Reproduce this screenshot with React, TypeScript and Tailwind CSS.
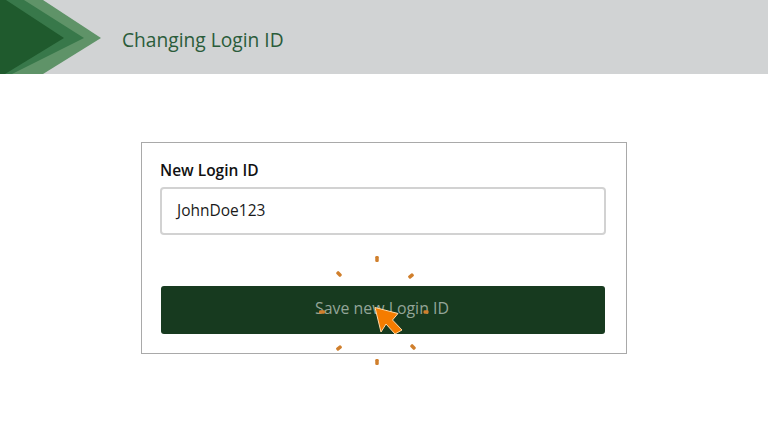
export default function App() {
  const ticks = [
    [377, 259, 0, 6],
    [411, 276, 50, 6],
    [426, 312, 90, 5],
    [413, 347, 135, 6],
    [377, 362, 180, 6],
    [339, 348, 232, 6],
    [322, 312, 270, 6],
    [339, 274, -45, 6],
  ];
  return (
    <div className="relative w-[768px] h-[432px] overflow-hidden bg-white font-['Open_Sans',sans-serif]">
      <header className="flex h-[74px] items-center bg-[#d1d3d4]">
        <svg width="102" height="74" viewBox="0 0 102 74" className="shrink-0">
          <polygon points="0,0 43,0 101,38 43,74 0,74" fill="#5f9368" />
          <polygon points="0,0 24,0 84,38 12,74 0,74" fill="#38784a" />
          <polygon points="0,0 6,0 64,38 5,74 0,74" fill="#1f5a2d" />
        </svg>
        <h1 className="ml-[20px] mt-[5px] text-[19.2px] leading-none text-[#2a5c3a]">Changing Login ID</h1>
      </header>
      <main className="flex pl-[141px] pt-[68px]">
        <section className="flex h-[212px] w-[486px] flex-col border border-[#a9a9a9] pl-[18px] pr-[20px] pt-[16px]">
          <label className="text-[15.5px] font-semibold leading-[22px] text-[#111111]">New Login ID</label>
          <div className="mt-[6px] flex h-[48px] w-[446px] items-center rounded-[4px] border-2 border-[#d2d2d2] pb-[1px] pl-[15px] text-[15.5px] text-[#1a1a1a]">
            JohnDoe123
          </div>
          <button className="ml-px mt-[51px] h-[48px] w-[444px] rounded-[3px] bg-[#173a1f] pb-[2px] pr-[2px] text-[15.9px] text-[#93a598]">
            Save new Login ID
          </button>
        </section>
      </main>
      <svg width="768" height="432" viewBox="0 0 768 432" className="absolute left-0 top-0">
        {ticks.map(([x, y, r, h]) => (
          <rect key={`${x}-${y}`} x={x - 1.75} y={y - h / 2} width="3.5" height={h} rx="1.25" fill="#d07f2c" transform={`rotate(${r} ${x} ${y})`} />
        ))}
        <path d="M375 307.5 L398 313.5 L392.5 320 L402 330 L395 334 L386 324 L381 332 Z" fill="#f57c00" stroke="#ffd9a8" strokeWidth="1" strokeLinejoin="round" />
      </svg>
    </div>
  );
}
